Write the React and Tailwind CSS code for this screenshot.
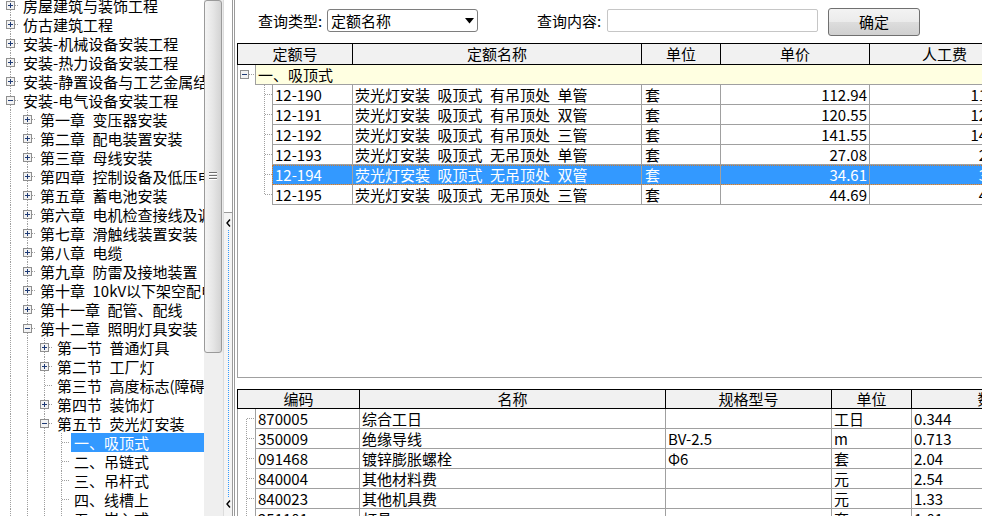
import React from "react";

const FONT = "font-['Noto_Sans_CJK_SC','Noto_Sans_CJK_JP',sans-serif]";
const SP = "\u2002";

const tree = [
  { l: 0, t: "房屋建筑与装饰工程", b: "+" },
  { l: 0, t: "仿古建筑工程", b: "+" },
  { l: 0, t: "安装-机械设备安装工程", b: "+" },
  { l: 0, t: "安装-热力设备安装工程", b: "+" },
  { l: 0, t: "安装-静置设备与工艺金属结构制作安装工程", b: "+" },
  { l: 0, t: "安装-电气设备安装工程", b: "-" },
  { l: 1, t: `第一章${SP}变压器安装`, b: "+" },
  { l: 1, t: `第二章${SP}配电装置安装`, b: "+" },
  { l: 1, t: `第三章${SP}母线安装`, b: "+" },
  { l: 1, t: `第四章${SP}控制设备及低压电器`, b: "+" },
  { l: 1, t: `第五章${SP}蓄电池安装`, b: "+" },
  { l: 1, t: `第六章${SP}电机检查接线及调试`, b: "+" },
  { l: 1, t: `第七章${SP}滑触线装置安装`, b: "+" },
  { l: 1, t: `第八章${SP}电缆`, b: "+" },
  { l: 1, t: `第九章${SP}防雷及接地装置`, b: "+" },
  { l: 1, t: `第十章${SP}10kV以下架空配电线路`, b: "+" },
  { l: 1, t: `第十一章${SP}配管、配线`, b: "+" },
  { l: 1, t: `第十二章${SP}照明灯具安装`, b: "-" },
  { l: 2, t: `第一节${SP}普通灯具`, b: "+" },
  { l: 2, t: `第二节${SP}工厂灯`, b: "+" },
  { l: 2, t: `第三节${SP}高度标志(障碍)灯`, b: null },
  { l: 2, t: `第四节${SP}装饰灯`, b: "+" },
  { l: 2, t: `第五节${SP}荧光灯安装`, b: "-" },
  { l: 3, t: "一、吸顶式", b: null, sel: true },
  { l: 3, t: "二、吊链式", b: null },
  { l: 3, t: "三、吊杆式", b: null },
  { l: 3, t: "四、线槽上", b: null },
  { l: 3, t: "五、嵌入式", b: null },
];

const DOT = "#a0a0a0";

function Box({ x, y, sign }) {
  return (
    <g shapeRendering="crispEdges">
      <rect x={x + 0.5} y={y + 0.5} width="8" height="8" fill="#f3f3f3" stroke="#8f8f8f" />
      <line x1={x + 2} y1={y + 4.5} x2={x + 7} y2={y + 4.5} stroke="#1f3b75" />
      {sign === "+" && <line x1={x + 4.5} y1={y + 2} x2={x + 4.5} y2={y + 7} stroke="#1f3b75" />}
    </g>
  );
}

function TreeCol({ tick, box }) {
  return (
    <svg width="17" height="19" className="block shrink-0">
      <line x1="8.5" y1="0" x2="8.5" y2="19" stroke={DOT} strokeDasharray="1 1" shapeRendering="crispEdges" />
      {tick && <line x1="9" y1="9.5" x2="17" y2="9.5" stroke={DOT} strokeDasharray="1 1" shapeRendering="crispEdges" />}
      {box && <Box x={4} y={5} sign={box} />}
    </svg>
  );
}

function TreeRow({ l, t, b, sel }) {
  const cols = [];
  for (let i = 0; i < l; i++) cols.push(<TreeCol key={i} />);
  return (
    <div className="flex h-[19px] items-center whitespace-nowrap pl-[2px]">
      {cols}
      <TreeCol tick box={b} />
      {sel ? (
        <span className="ml-[1px] flex-1 bg-[#3399ff] pl-[3px] leading-[19px] text-white">{t}</span>
      ) : (
        <span className="ml-[4px] leading-[19px]">{t}</span>
      )}
    </div>
  );
}

function Scrollbar() {
  return (
    <div className="flex w-[19px] shrink-0 flex-col bg-[#ebebeb]">
      <div className="flex h-[353px] w-[18px] items-center justify-center rounded-[3px] border border-[#9a9a9a] bg-[linear-gradient(to_right,#f4f4f4,#e6e6e6_50%,#d3d3d3)]">
        <svg width="8" height="9" className="block">
          <g shapeRendering="crispEdges">
            <line x1="0" y1="0.5" x2="8" y2="0.5" stroke="#6f6f6f" />
            <line x1="0" y1="1.5" x2="8" y2="1.5" stroke="#ffffff" />
            <line x1="0" y1="3.5" x2="8" y2="3.5" stroke="#6f6f6f" />
            <line x1="0" y1="4.5" x2="8" y2="4.5" stroke="#ffffff" />
            <line x1="0" y1="6.5" x2="8" y2="6.5" stroke="#6f6f6f" />
            <line x1="0" y1="7.5" x2="8" y2="7.5" stroke="#ffffff" />
          </g>
        </svg>
      </div>
      <div className="flex-1 bg-[#efefef]" />
    </div>
  );
}

function Chevron() {
  return (
    <svg width="5" height="8" className="block">
      <path d="M4 0.5 L1 4 L4 7.5" fill="none" stroke="#000" strokeWidth="1.4" />
    </svg>
  );
}

function Splitter() {
  return (
    <div className="flex w-[14px] shrink-0 bg-white">
      <div className="w-[1px] bg-[#dcdcdc]" />
      <div className="flex w-[9px] flex-col border-r border-[#9a9a9a]">
        <div className="h-[213px] border-b border-[#9a9a9a] bg-white" />
        <div className="flex flex-1 flex-col items-center bg-[#f4f4f4] pt-[6px] pb-[8px]">
          <Chevron />
          <div className="my-[3px] w-0 flex-1 border-l border-dotted border-[#3399ff]" />
          <Chevron />
        </div>
      </div>
      <div className="w-[1px] bg-white" />
      <div className="w-[1px] bg-[#9a9a9a]" />
      <div className="w-[2px] bg-white" />
    </div>
  );
}

function Toolbar() {
  return (
    <div className="flex h-[43px] shrink-0 items-start pl-[21px] pt-[9px]">
      <span className="w-[69px] shrink-0 leading-[23px]">查询类型:</span>
      <div className="flex h-[23px] w-[151px] shrink-0 items-center rounded-[3px] border border-[#7e7e7e] bg-white pl-[3px] pr-[3px]">
        <span className="flex-1 leading-[20px]">定额名称</span>
        <svg width="9" height="6" className="block">
          <path d="M0 0 H9 L4.5 5.5 Z" fill="#000" />
        </svg>
      </div>
      <span className="ml-[59px] w-[70px] shrink-0 leading-[23px]">查询内容:</span>
      <div className="h-[23px] w-[211px] shrink-0 rounded-[2px] border border-[#c6c6c6] bg-white" />
      <button className="ml-[10px] -mt-[1px] h-[28px] w-[92px] shrink-0 rounded-[3px] border border-[#707070] bg-[linear-gradient(to_bottom,#f3f3f3_0%,#ebebeb_50%,#dddddd_51%,#d0d0d0_100%)] leading-[24px] text-black">
        确定
      </button>
    </div>
  );
}

const upperRows = [
  { c: "12-190", n: `荧光灯安装${SP}吸顶式${SP}有吊顶处${SP}单管`, u: "套", p: "112.94", r: "11.58" },
  { c: "12-191", n: `荧光灯安装${SP}吸顶式${SP}有吊顶处${SP}双管`, u: "套", p: "120.55", r: "12.60" },
  { c: "12-192", n: `荧光灯安装${SP}吸顶式${SP}有吊顶处${SP}三管`, u: "套", p: "141.55", r: "14.40" },
  { c: "12-193", n: `荧光灯安装${SP}吸顶式${SP}无吊顶处${SP}单管`, u: "套", p: "27.08", r: "2.89" },
  { c: "12-194", n: `荧光灯安装${SP}吸顶式${SP}无吊顶处${SP}双管`, u: "套", p: "34.61", r: "3.54", sel: true },
  { c: "12-195", n: `荧光灯安装${SP}吸顶式${SP}无吊顶处${SP}三管`, u: "套", p: "44.69", r: "4.83" },
];

const HC = "flex h-full shrink-0 items-center justify-center border-r border-black leading-[18px]";
const CELL = "h-full shrink-0 overflow-hidden whitespace-nowrap border-r border-[#a0a0a0] leading-[19px]";

function UpperGrid() {
  return (
    <div className="flex h-[335px] shrink-0 flex-col">
      <div className="flex h-[22px] shrink-0 border-y border-l border-black bg-[#f1f1f1]">
        <div className={`${HC} w-[115px]`}>定额号</div>
        <div className={`${HC} w-[289px]`}>定额名称</div>
        <div className={`${HC} w-[79px]`}>单位</div>
        <div className={`${HC} w-[149px]`}>单价</div>
        <div className={`${HC} w-[150px]`}>人工费</div>
      </div>
      <div className="flex-1 border-b border-l border-[#a0a0a0]">
        <div className="flex h-[20px]">
          <svg width="17" height="20" className="block shrink-0">
            <Box x={2} y={5} sign="-" />
            <line x1="11" y1="9.5" x2="17" y2="9.5" stroke={DOT} strokeDasharray="1 1" shapeRendering="crispEdges" />
          </svg>
          <div className="h-full w-[900px] shrink-0 border-b border-l border-[#a0a0a0] bg-[#ffffe1] pl-[2px] leading-[19px]">
            一、吸顶式
          </div>
        </div>
        {upperRows.map((r, i) => (
          <div key={r.c} className="flex h-[20px]">
            <svg width="34" height="20" className="block shrink-0">
              <line
                x1="26.5"
                y1="0"
                x2="26.5"
                y2={i === upperRows.length - 1 ? 10 : 20}
                stroke={DOT}
                strokeDasharray="1 1"
                shapeRendering="crispEdges"
              />
              <line x1="27" y1="9.5" x2="34" y2="9.5" stroke={DOT} strokeDasharray="1 1" shapeRendering="crispEdges" />
            </svg>
            <div
              className={`flex h-full shrink-0 border-b border-[#a0a0a0] ${
                r.sel
                  ? "bg-[#3399ff] text-white outline-1 outline-dotted outline-[#c87a34] -outline-offset-1"
                  : ""
              }`}
            >
              <div className={`${CELL} w-[81px] border-l pl-[2px]`}>{r.c}</div>
              <div className={`${CELL} w-[289px] pl-[2px]`}>{r.n}</div>
              <div className={`${CELL} w-[79px] pl-[3px]`}>{r.u}</div>
              <div className={`${CELL} w-[149px] pr-[2px] text-right`}>{r.p}</div>
              <div className={`${CELL} w-[150px] pr-[11px] text-right`}>{r.r}</div>
            </div>
          </div>
        ))}
      </div>
    </div>
  );
}

const lowerRows = [
  { c: "870005", n: "综合工日", s: "", u: "工日", q: "0.344" },
  { c: "350009", n: "绝缘导线", s: "BV-2.5", u: "m", q: "0.713" },
  { c: "091468", n: "镀锌膨胀螺栓", s: "Φ6", u: "套", q: "2.04" },
  { c: "840004", n: "其他材料费", s: "", u: "元", q: "2.54" },
  { c: "840023", n: "其他机具费", s: "", u: "元", q: "1.33" },
  { c: "251101", n: "灯具", s: "", u: "套", q: "1.01" },
];

function LowerGrid() {
  return (
    <div className="mt-[11px] flex shrink-0 flex-col">
      <div className="flex h-[20px] shrink-0 border-y border-l border-black bg-[#f1f1f1]">
        <div className={`${HC} w-[122px]`}>编码</div>
        <div className={`${HC} w-[306px]`}>名称</div>
        <div className={`${HC} w-[166px]`}>规格型号</div>
        <div className={`${HC} w-[80px]`}>单位</div>
        <div className={`${HC} w-[162px]`}>数量</div>
      </div>
      <div className="border-l border-[#a0a0a0]">
        {lowerRows.map((r, i) => (
          <div key={r.c} className="flex h-[20px]">
            <svg width="17" height="20" className="block shrink-0">
              <line
                x1="8.5"
                y1={i === 0 ? 9.5 : 0}
                x2="8.5"
                y2="20"
                stroke={DOT}
                strokeDasharray="1 1"
                shapeRendering="crispEdges"
              />
              <line x1="9" y1="9.5" x2="17" y2="9.5" stroke={DOT} strokeDasharray="1 1" shapeRendering="crispEdges" />
            </svg>
            <div className="flex h-full shrink-0 border-b border-[#a0a0a0]">
              <div className={`${CELL} w-[105px] border-l pl-[2px]`}>{r.c}</div>
              <div className={`${CELL} w-[306px] pl-[2px]`}>{r.n}</div>
              <div className={`${CELL} w-[166px] pl-[2px]`}>{r.s}</div>
              <div className={`${CELL} w-[80px] pl-[2px]`}>{r.u}</div>
              <div className={`${CELL} w-[162px] pl-[2px]`}>{r.q}</div>
            </div>
          </div>
        ))}
      </div>
    </div>
  );
}

export default function App() {
  return (
    <div className={`flex h-[516px] w-[982px] overflow-hidden bg-white text-[15px] text-black ${FONT}`}>
      <div className="h-full w-[204px] shrink-0 overflow-hidden">
        <div className="-mt-[4px]">
          {tree.map((n, i) => (
            <TreeRow key={i} {...n} />
          ))}
        </div>
      </div>
      <Scrollbar />
      <Splitter />
      <div className="flex h-full min-w-0 flex-1 flex-col overflow-hidden">
        <Toolbar />
        <UpperGrid />
        <LowerGrid />
      </div>
    </div>
  );
}
